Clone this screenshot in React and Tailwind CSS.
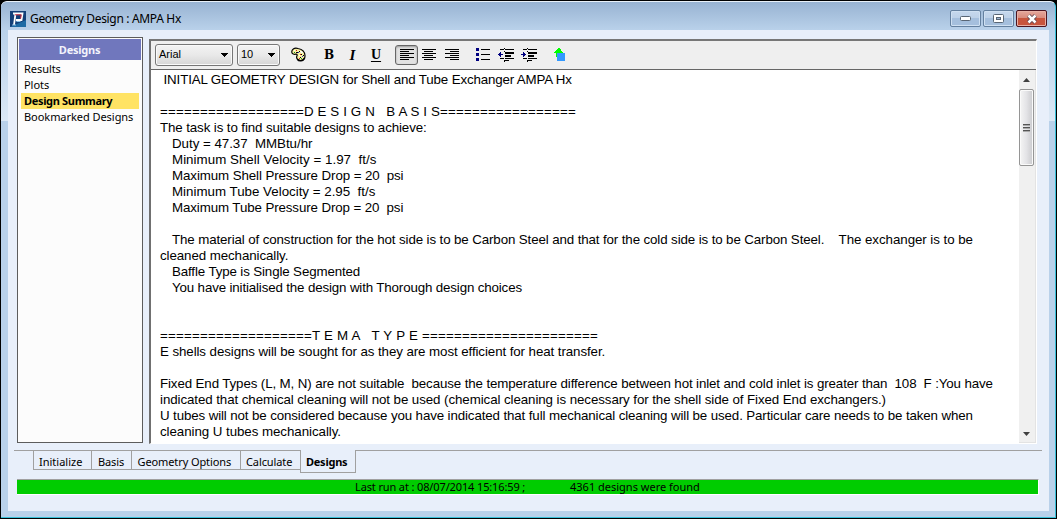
const eqTrack = "tracking-[0.213px]";

const documentLines = [
  [["\u00a0INITIAL GEOMETRY DESIGN for Shell and Tube Exchanger AMPA Hx", "tracking-[-0.15px]"]],
  [],
  [
    ["==================", eqTrack],
    ["D E S I G N   B A S I S", "tracking-[0.12px]"],
    ["=================", eqTrack],
  ],
  [["The task is to find suitable designs to achieve:", "tracking-[-0.11px]"]],
  [["Duty = 47.37  MMBtu/hr", "pl-3 tracking-[-0.03px]"]],
  [["Minimum Shell Velocity = 1.97  ft/s", "pl-3 tracking-[0.03px]"]],
  [["Maximum Shell Pressure Drop = 20  psi", "pl-3 tracking-[-0.1px]"]],
  [["Minimum Tube Velocity = 2.95  ft/s", "pl-3 tracking-[0px]"]],
  [["Maximum Tube Pressure Drop = 20  psi", "pl-3 tracking-[-0.11px]"]],
  [],
  [["The material of construction for the hot side is to be Carbon Steel and that for the cold side is to be Carbon Steel.", "pl-3 tracking-[-0.118px]"], ["    The exchanger is to be", "tracking-[-0.06px]"]],
  [["cleaned mechanically.", "tracking-[-0.09px]"]],
  [["Baffle Type is Single Segmented", "pl-3 tracking-[-0.13px]"]],
  [["You have initialised the design with Thorough design choices", "pl-3 tracking-[-0.145px]"]],
  [],
  [],
  [
    ["===================", eqTrack],
    ["T E M A   T Y P E ", "tracking-[0.23px]"],
    ["======================", eqTrack],
  ],
  [["E shells designs will be sought for as they are most efficient for heat transfer.", "tracking-[-0.09px]"]],
  [],
  [["Fixed End Types (L, M, N) are not suitable  because the temperature difference between hot inlet and cold inlet is greater than  108  F :You have", "tracking-[-0.12px]"]],
  [["indicated that chemical cleaning will not be used (chemical cleaning is necessary for the shell side of Fixed End exchangers.)", "tracking-[-0.083px]"]],
  [["U tubes will not be considered because you have indicated that full mechanical cleaning will be used. Particular care needs to be taken when", "tracking-[-0.121px]"]],
  [["cleaning U tubes mechanically.", "tracking-[-0.06px]"]],
];

function AppLogo() {
  return (
    <svg width="16" height="16" viewBox="0 0 16 16">
      <rect width="16" height="16" fill="#123f78" />
      <path d="M0 16 16 9V16Z" fill="#1d6ba5" />
      <path d="M3 2.5h9.5l-1 6.5H6" fill="none" stroke="#fff" strokeWidth="1.8" />
      <path d="M5.5 2.5 4 14" fill="none" stroke="#fff" strokeWidth="1.8" />
      <path d="M5 3.8h6.2l-.6 3.8" fill="none" stroke="#d22c3c" strokeWidth="1" />
      <path d="M2 14h4M6.5 10.5h4" stroke="#8cc4e8" strokeWidth="1" />
    </svg>
  );
}

function Palette() {
  return (
    <svg width="15" height="15" viewBox="0 0 15 15">
      <path d="M7 1.5C3 .5.5 2.500.8 5.200 1 7 3 7.500 4.800 7.200 6.200 7 6.500 8 5.800 9.200 5 11.500 7 13.500 9.500 13.500 12.500 13.500 14.200 11.500 14 8.500 13.800 4.800 11 2.300 7 1.500Z" fill="#f7f0a0" stroke="#000" strokeWidth="1.2" />
      <path d="M6.300 12.200C8 14.500 12 14.300 13.600 11.200" fill="none" stroke="#000" strokeWidth="1.6" />
      <g shapeRendering="crispEdges">
        <path d="M5 3h1v1H5zM9 7h1v1H9zM8 11h1v1H8z" fill="#d02020" />
        <path d="M7 5h1v1H7zM11 9h1v1h-1z" fill="#3030d0" />
        <path d="M3 5h1v1H3zM10 11h1v1h-1z" fill="#18a018" />
        <path d="M3 3h1v1H3zM9 4h2v1H9zM10 5h2v1h-2zM8 8h1v1H8z" fill="#fff" />
        <path d="M8 4h1v1H8zM6 5h1v1H6zM10 7h1v1h-1zM12 8h1v1h-1zM9 10h1v1H9zM5 5h1v1H5z" fill="#000" />
      </g>
    </svg>
  );
}

function AlignIcon({ kind }) {
  const rows = [14, 9, 14, 9, 14, 9];
  return (
    <svg width="14" height="12" viewBox="0 0 14 12" shapeRendering="crispEdges">
      {rows.map((w, i) => {
        const x = kind === "left" ? 0 : kind === "right" ? 14 - w : Math.floor((14 - w) / 2);
        return <rect key={i} x={x} y={i * 2} width={w} height="1" fill="#000" />;
      })}
    </svg>
  );
}

function ListIcon() {
  return (
    <svg width="15" height="14" viewBox="0 0 15 14" shapeRendering="crispEdges">
      <path d="M0 0h3v3H0zM0 5h3v3H0zM0 10h3v3H0z" fill="#000080" />
      <path d="M5 1h9v1H5zM5 6h9v1H5zM5 11h9v1H5z" fill="#000" />
    </svg>
  );
}

function IndentIcon({ inward }) {
  return (
    <svg width="16" height="14" viewBox="0 0 16 14" shapeRendering="crispEdges">
      <path d="M2 1h4v1H2zM7 1h9v1H7zM7 4h9v2H7zM7 7h6v2H7zM7 10h9v1H7zM2 10h4v1H2zM2 4h1v0H2zM7 12h4v1H7zM6 0h1v1H6zM6 3h1v1H6zM6 12h1v2H6z" fill="#000" />
      {inward ? (
        <path d="M0 6h5v1H0zM2 4h1v5H2zM3 5h1v3H3z" fill="#000080" />
      ) : (
        <path d="M0 6h5v1H0zM1 5h1v3H1zM2 4h1v5H2z" fill="#000080" />
      )}
    </svg>
  );
}

function InsertIcon() {
  return (
    <svg width="12" height="14" viewBox="0 0 12 14" shapeRendering="crispEdges">
      <path d="M4 0h2v1h1v2h1v1h1v2H7v3H2V5H0V4h1V3h1V2h1V1h1z" fill="#00ff00" />
      <rect x="3" y="5" width="8" height="8" fill="#3399ff" />
    </svg>
  );
}

function Select({ value, size }) {
  return (
    <div className={`${size} flex h-[22px] items-center justify-between rounded-[3px] border border-[#777] bg-linear-to-b from-[#f3f3f3] from-0% via-[#e9e9e9] via-50% to-[#d6d6d6] pr-1 pl-[3px] text-[11px] shadow-[inset_0_0_0_1px_#fafafa]`}>
      <span>{value}</span>
      <svg width="7" height="4" viewBox="0 0 7 4" shapeRendering="crispEdges">
        <path d="M0 0h7v1H6v1H5v1H4v1H3V3H2V2H1V1H0z" fill="#000" />
      </svg>
    </div>
  );
}

function WindowButton({ close, children }) {
  return (
    <div
      className={
        close
          ? "flex h-[17px] w-[31px] items-center justify-center rounded-[2px] border border-[#4c1520] bg-linear-to-b from-[#e5a89c] from-0% via-[#d98c7e] via-45% to-[#c8553d] to-50% shadow-[inset_0_0_0_1px_#e8b0a5]"
          : "flex h-[17px] w-[31px] items-center justify-center rounded-[2px] border border-[#64809f] bg-linear-to-b from-[#c6d8ed] from-0% via-[#bdd1e8] via-45% to-[#a5bfdd] to-50% shadow-[inset_0_0_0_1px_#cfe0f2]"
      }
    >
      {children}
    </div>
  );
}

const sections = ["Results", "Plots", "Design Summary", "Bookmarked Designs"];
const tabs = [
  ["Initialize", "w-[58px] pl-[5px]"],
  ["Basis", "w-10 pl-[6px] tracking-[-0.1px]"],
  ["Geometry Options", "w-[109px] pl-[5.5px] tracking-[-0.1px]"],
  ["Calculate", "w-[60px] pl-[5px] tracking-[-0.1px]"],
];

export default function App() {
  return (
    <div className="h-[519px] w-[1057px] overflow-hidden bg-black pt-px pr-px pb-px pl-px font-['Noto_Sans',sans-serif] text-[11px] text-black">
      <div className="flex h-[517px] flex-col rounded-t-[6px] border-t border-r border-b border-[#38c0d8] border-t-[#e8f0f8] bg-[#b9d1ea] bg-linear-to-b from-[#98b3d2] from-0% via-[#b9d1ea] via-[28px] to-[#dbe8f5] to-[118px] bg-[length:100%_119px] bg-no-repeat pr-1.5 pb-1.5 pl-[7px]">
        <header className="flex h-7 shrink-0 items-start justify-between pr-[2px] pl-[2px]">
          <div className="flex items-center gap-1 pt-2">
            <AppLogo />
            <span className="pt-px text-[12px] leading-4 tracking-[-0.33px]">Geometry Design : AMPA Hx</span>
          </div>
          <div className="flex gap-[2px] pt-2">
            <WindowButton>
              <svg width="12" height="5" viewBox="0 0 12 5"><rect x="0.5" y="0.5" width="10" height="4" rx="1" fill="#fff" stroke="#596675" /></svg>
            </WindowButton>
            <WindowButton>
              <svg width="11" height="9" viewBox="0 0 11 9"><rect x="0.5" y="0.5" width="10" height="8" rx="1" fill="#fff" stroke="#596675" /><rect x="3.5" y="3.5" width="4" height="2" fill="#9cb5d2" stroke="#596675" /></svg>
            </WindowButton>
            <WindowButton close>
              <svg width="12" height="10" viewBox="0 0 12 10">
                <path d="M2.500 1.500 9.500 8.500M9.500 1.500 2.500 8.500" stroke="#5b4650" strokeWidth="4.200" />
                <path d="M2.500 1.500 9.500 8.500M9.500 1.500 2.500 8.500" stroke="#fff" strokeWidth="2.500" />
              </svg>
            </WindowButton>
          </div>
        </header>

        <div className="flex min-h-0 flex-1 flex-col bg-[#e8effa] pt-[7px]">
          <div className="flex h-[413px] shrink-0 gap-1.5 pl-[9px]">
            <aside className="h-[406px] w-[126px] shrink-0 border border-[#5c5c5c] bg-[#fcfcfc] p-px">
              <div className="h-[21px] bg-[#7077bd] pr-px text-center leading-[22px] font-bold tracking-[-0.25px] text-[#f3f3fc]">Designs</div>
              <ul className="pt-[1px]">
                {sections.map((s) => (
                  <li
                    key={s}
                    className={
                      s === "Design Summary"
                        ? "mx-[2px] h-4 bg-[#ffe364] pl-[3px] leading-4 font-bold tracking-[-0.33px] whitespace-nowrap"
                        : "mx-[2px] h-4 pl-[3px] leading-4 tracking-[-0.05px] whitespace-nowrap"
                    }
                  >
                    {s}
                  </li>
                ))}
              </ul>
            </aside>

            <main className="mt-[2px] flex h-[405px] w-[888px] flex-col border-t-2 border-r border-b border-l-2 border-t-[#777] border-r-[#fff] border-b-[#fff] border-l-[#707070] bg-white font-['Liberation_Sans',sans-serif]">
              <div className="flex h-[29px] shrink-0 items-center border-b border-[#666] bg-[#efefef] pb-px pl-[4px]">
                <Select value="Arial" size="w-[78px]" />
                <Select value="10" size="ml-1 w-[43px]" />
                <div className="ml-[11px]"><Palette /></div>
                <div className="ml-[11px] flex h-5 items-center font-['DejaVu_Serif',serif] text-[12px] leading-4 font-bold">
                  <span className="w-6 text-center">B</span>
                  <span className="w-[23px] text-center font-['Liberation_Serif',serif] text-[15px] italic">I</span>
                  <span className="w-6 text-center font-['Liberation_Serif',serif] text-[14px] underline underline-offset-2">U</span>
                </div>
                <div className="ml-[7px] flex h-5 w-[23px] items-center justify-center rounded-[3px] border border-[#666] bg-[#e2e2e2] shadow-[inset_0_1px_2px_#999]">
                  <AlignIcon kind="left" />
                </div>
                <div className="ml-1"><AlignIcon kind="center" /></div>
                <div className="ml-[9px]"><AlignIcon kind="right" /></div>
                <div className="ml-[17px]"><ListIcon /></div>
                <div className="ml-[7px]"><IndentIcon /></div>
                <div className="ml-[7px]"><IndentIcon inward /></div>
                <div className="ml-[17px]"><InsertIcon /></div>
              </div>
              <div className="flex min-h-0 flex-1">
                <div className="w-[868px] overflow-hidden pt-[2px] pl-[9px] text-[13.333px] leading-4">
                  {documentLines.map((parts, i) => (
                    <div key={i} className="h-4 whitespace-pre">
                      {parts.map(([text, cls], j) => (
                        <span key={j} className={cls}>{text}</span>
                      ))}
                    </div>
                  ))}
                </div>
                <div className="flex w-[17px] flex-col items-center border-r border-b border-[#e3e3e3] bg-[#f0f0f0] pr-px">
                  <div className="flex h-[19px] items-center">
                    <svg width="7" height="4" viewBox="0 0 7 4"><path d="M0 4 3.500 0 7 4Z" fill="#404040" /></svg>
                  </div>
                  <div className="flex h-[77px] w-[15px] flex-col items-center justify-center gap-px rounded-[2px] border border-[#959595] bg-linear-to-r from-[#f5f5f5] from-0% via-[#e3e3e6] via-50% to-[#cacacd] shadow-[inset_0_0_0_1px_#fafafa]">
                    {[0, 1, 2].map((i) => (
                      <div key={i} className="h-[2px] w-[7px] border-t border-[#555] bg-[#aaa]" />
                    ))}
                  </div>
                  <div className="mt-auto flex h-[17px] items-center">
                    <svg width="7" height="4" viewBox="0 0 7 4"><path d="M0 0 3.500 4 7 0Z" fill="#404040" /></svg>
                  </div>
                </div>
              </div>
            </main>
          </div>

          <nav className="flex h-[23px] shrink-0 pl-1.5">
            <div className="h-px w-[19px] bg-[#a0a0a0]" />
            {tabs.map(([name, cls]) => (
              <div key={name} className={`${cls} h-5 border-t border-b border-l border-[#a0a0a0] leading-[22px] whitespace-nowrap`}>{name}</div>
            ))}
            <div className="h-[23px] w-14 border-r border-b border-l border-[#a0a0a0] pl-[5px] leading-6 font-bold tracking-[-0.25px]">Designs</div>
            <div className="h-px w-[686px] bg-[#a0a0a0]" />
          </nav>

          <div className="mt-[6px] ml-[9px] flex h-4 w-[1022px] shrink-0 border-t border-r border-b border-t-[#a0a0a0] border-r-white border-b-white bg-[#00cc00] pl-[338px] leading-[13px] whitespace-nowrap">
            <span className="w-[215px] tracking-[-0.13px]">Last run at : 08/07/2014 15:16:59 ;</span>
            <span>4361 designs were found</span>
          </div>
        </div>
      </div>
    </div>
  );
}
